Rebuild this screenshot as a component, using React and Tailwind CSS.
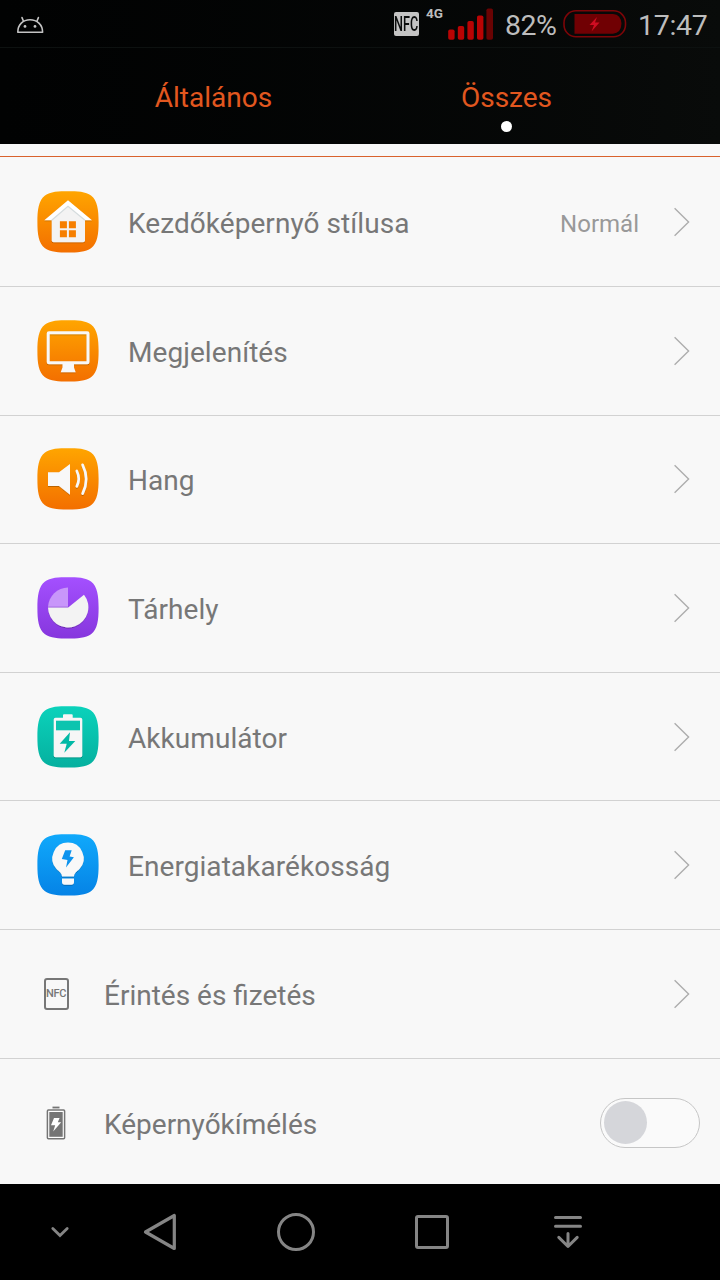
import React, { useState } from 'react'

function Tile({ id, from, to, children }) {
    return (
        <svg width="62" height="62" viewBox="0 0 62 62" className="shrink-0">
            <defs>
                <linearGradient id={id} x1="0" y1="0" x2="0" y2="1">
                    <stop offset="0" stopColor={from} />
                    <stop offset="1" stopColor={to} />
                </linearGradient>
                <filter id={`${id}-shadow`} x="-20%" y="-20%" width="140%" height="140%">
                    <feDropShadow dx="0" dy="0.8" stdDeviation="0.7" floodColor="#000" floodOpacity="0.3" />
                </filter>
            </defs>
            <path
                d="M31 0.2C40 0.2 49 0.4 54 4.5C60.5 9.6 61.6 19 61.6 31C61.6 43 60.5 52.2 54 57.3C49 61.2 40 61.6 31 61.6C22 61.6 13 61.2 8 57.3C1.5 52.2 0.4 43 0.4 31C0.4 19 1.5 9.6 8 4.5C13 0.4 22 0.2 31 0.2Z"
                fill={`url(#${id})`}
            />
            <g filter={`url(#${id}-shadow)`}>{children}</g>
        </svg>
    )
}

const HomeIcon = () => (
    <Tile id="home" from="#ffa500" to="#f36f00">
        <path d="M31 12L48 27V49.3a2 2 0 0 1-2 2H16.7a2 2 0 0 1-2-2V27Z" fill="#f3f3f3" />
        <path d="M31 9.3L55 29.3H48L31 15L14.5 29.3H7.3Z" fill="#fff" />
        <path d="M14.7 29.3L31 15.4L48 29.3" fill="none" stroke="#d5dcde" strokeWidth="1.2" />
        <path d="M22.9 30.2h7v7h-7zM31.9 30.2h7v7h-7zM22.9 39.2h7v7h-7zM31.9 39.2h7v7h-7z" fill="#f67f00" />
    </Tile>
)

const DisplayIcon = () => (
    <Tile id="display" from="#ffa500" to="#f36f00">
        <rect x="11.2" y="12.8" width="39.8" height="30" rx="0.8" fill="none" stroke="#f8f8f8" strokeWidth="3" />
        <path d="M25.5 44H37V47.5L38.7 52.3H23.7L25.5 47.5Z" fill="#f8f8f8" />
    </Tile>
)

const SoundIcon = () => (
    <Tile id="sound" from="#ffa500" to="#f36f00">
        <path d="M11 24.3H22L33 16V46.7L22 38H11Z" fill="#f8f8f8" />
        <path d="M39.8 23Q43.6 30.7 39.8 38.4M45.6 16.8Q52.8 31 45.6 45.6" fill="none" stroke="#f8f8f8" strokeWidth="2.7" strokeLinecap="round" />
    </Tile>
)

const StorageIcon = () => (
    <Tile id="storage" from="#a450ff" to="#8636dd">
        <path d="M11 29.8A20.3 20.3 0 0 1 31 10.5V29.8Z" fill="#c896fa" />
        <path d="M11 30.6H31.2L47 17.7A20.2 20.2 0 1 1 11 30.6Z" fill="#f3f3f3" />
    </Tile>
)

const BatteryIcon = () => (
    <Tile id="battery" from="#0bd2bb" to="#05b09f">
        <path d="M26 11.7V9.3a1 1 0 0 1 1-1h7.7a1 1 0 0 1 1 1V11.7H43.5a1.8 1.8 0 0 1 1.8 1.8V49.5a1.8 1.8 0 0 1-1.8 1.8H18.5a1.8 1.8 0 0 1-1.8-1.8V13.5a1.8 1.8 0 0 1 1.8-1.8Z" fill="#f6f6f6" />
        <path d="M19 14.7H43V24.3H19Z" fill="#08c4af" />
        <path d="M33 26.3L22.7 37.7H29.7L27.3 46.7L38.3 35H32Z" fill="#06b9a6" />
    </Tile>
)

const PowerIcon = () => (
    <Tile id="power" from="#10a9fb" to="#0583e6">
        <path d="M31 8.6A15.7 15.7 0 0 1 42.7 34.7C39.5 38 37.2 39 37 42.6H25C24.8 39 22.5 38 19.3 34.7A15.7 15.7 0 0 1 31 8.6Z" fill="#f8f8f8" />
        <path d="M25 44.4H37V48Q37 50.7 34.3 50.7H27.7Q25 50.7 25 48Z" fill="#f8f8f8" />
        <path d="M28.2 16.3H34.7L32.6 22.6L36.9 23.3L29 33.5L30.5 26L24.8 25Z" fill="#0c93ee" />
    </Tile>
)

const NfcIcon = () => (
    <div className="flex h-8 w-[25px] shrink-0 items-center justify-center rounded-[3px] border-2 border-[#777]">
        <span className="text-[11px] leading-none font-medium tracking-[-0.4px] text-[#777]">NFC</span>
    </div>
)

const SaverIcon = () => (
    <svg width="20" height="34" viewBox="0 0 20 34" className="shrink-0">
        <path d="M6.5 1.5H13.5" stroke="#757575" strokeWidth="1.8" />
        <rect x="1.4" y="4" width="17.2" height="28.8" rx="1" fill="#fff" stroke="#757575" strokeWidth="1.5" />
        <rect x="3.3" y="6" width="13.4" height="24.8" fill="#757575" />
        <path d="M8 12H13.6L11.8 16.2H15.2L7.2 25.6L9.2 19.2H5Z" fill="#fff" />
    </svg>
)

const items = [
    { label: 'Kezdőképernyő stílusa', icon: HomeIcon, value: 'Normál' },
    { label: 'Megjelenítés', icon: DisplayIcon },
    { label: 'Hang', icon: SoundIcon },
    { label: 'Tárhely', icon: StorageIcon },
    { label: 'Akkumulátor', icon: BatteryIcon },
    { label: 'Energiatakarékosság', icon: PowerIcon },
    { label: 'Érintés és fizetés', icon: NfcIcon, small: true },
    { label: 'Képernyőkímélés', icon: SaverIcon, small: true, toggle: true },
]

function StatusBar() {
    return (
        <div className="flex h-12 items-start border-b border-[#0d1110] pl-4 text-[#bdbdbd]">
            <svg width="28" height="18" viewBox="0 0 28 18" className="mt-4 shrink-0" fill="none" stroke="#c4c4c4" strokeWidth="1.6" strokeLinecap="round">
                <path d="M1.8 16.3C1.8 8.6 7 3.8 14 3.8S26.6 8.6 26.6 16.3Z" strokeLinejoin="round" />
                <path d="M6 1.6L7.4 5M22.4 1.6L21 5" />
                <circle cx="9" cy="10.4" r="1.4" fill="#c4c4c4" stroke="none" />
                <circle cx="19" cy="10.4" r="1.4" fill="#c4c4c4" stroke="none" />
            </svg>
            <div className="mt-3 ml-[350px] flex h-6 w-[25px] shrink-0 items-center justify-center rounded-[2px] bg-[#c4c4c4]">
                <span className="scale-x-[0.6] text-[21px] leading-none font-medium text-[#0b0d0d]">NFC</span>
            </div>
            <span className="mt-[7px] ml-[7px] w-[18px] shrink-0 text-[13.5px] leading-[13px] font-bold">4G</span>
            <svg width="46" height="32" viewBox="0 0 46 32" className="mt-2 ml-1 shrink-0" fill="#b90404">
                <rect x="0.2" y="21.5" width="6.4" height="10.2" rx="1.8" />
                <rect x="9.8" y="18" width="6.4" height="13.7" rx="1.8" />
                <rect x="19.4" y="13" width="6.4" height="18.7" rx="1.8" />
                <rect x="29" y="7.5" width="6.4" height="24.2" rx="1.8" />
                <rect x="38.4" y="0.5" width="6.6" height="31.2" rx="1.8" fill="#6a0303" />
            </svg>
            <span className="mt-2 ml-[11px] w-[53px] shrink-0 text-[28.5px] leading-[36px] tracking-[-0.5px]">82%</span>
            <svg width="64" height="29" viewBox="0 0 64 29" className="mt-[9px] ml-[5px] shrink-0">
                <rect x="1" y="1.8" width="61.5" height="26" rx="12" fill="none" stroke="#7d0508" strokeWidth="1.6" />
                <path d="M11.5 5H50Q58 5.6 58.5 14.8Q58 24 50 24.8H11.5Z" fill="#700003" />
                <path d="M34 8L26.5 16H31L28.5 22.5L36.5 13.5H32Z" fill="#cf0d22" />
            </svg>
            <span className="mt-2 ml-[11px] shrink-0 text-[28.5px] leading-[36px] tracking-[-0.3px]">17:47</span>
        </div>
    )
}

function Tabs({ tab, setTab }) {
    return (
        <div className="flex h-24 px-[67px]">
            {['Általános', 'Összes'].map((name) => (
                <button
                    key={name}
                    onClick={() => setTab(name)}
                    className="flex flex-1 flex-col items-center pt-8 text-[28px] leading-[36px] text-[#e2571f]"
                >
                    <span>{name}</span>
                    {tab === name && <span className="mt-[5px] size-[11px] rounded-full bg-white" />}
                </button>
            ))}
        </div>
    )
}

function Toggle({ on, setOn }) {
    return (
        <button
            role="switch"
            aria-checked={on}
            onClick={() => setOn(!on)}
            className={`mr-5 flex h-[50px] w-[100px] items-center rounded-full border border-[#c6c6c6] bg-[#fafafa] px-[3px] ${on ? 'justify-end' : 'justify-start'}`}
        >
            <span className="size-[43px] rounded-full bg-[#d5d6da]" />
        </button>
    )
}

function Row({ item, on, setOn }) {
    const Icon = item.icon

    return (
        <div className="flex h-[128.6px] shrink-0 items-center border-b border-[#d2d2d2] first:h-[130px] last:h-[129.6px]">
            {item.small ? (
                <div className="flex w-[104px] shrink-0 justify-center pr-2 pl-4">
                    <Icon />
                </div>
            ) : (
                <div className="w-32 shrink-0 pl-[37px]">
                    <Icon />
                </div>
            )}
            <span className={`flex-1 pt-1 text-[28px] leading-[36px] text-[#777] ${item.small ? 'tracking-normal' : 'tracking-[0.06px]'}`}>
                {item.label}
            </span>
            {item.value && <span className="mr-[34px] pt-1 text-[24px] leading-[32px] text-[#999]">{item.value}</span>}
            {item.toggle ? (
                <Toggle on={on} setOn={setOn} />
            ) : (
                <svg width="17" height="30" viewBox="0 0 17 30" className="mr-[30px] shrink-0">
                    <path d="M1.6 1.2L15.6 15L1.6 28.8" fill="none" stroke="#adadad" strokeWidth="1.4" />
                </svg>
            )}
        </div>
    )
}

function NavBar() {
    return (
        <div className="flex h-24 shrink-0 items-center bg-black text-[#858585]">
            <div className="flex w-[92px] justify-center pl-7">
                <svg width="20" height="12" viewBox="0 0 20 12" fill="none" stroke="currentColor" strokeWidth="2.8" strokeLinecap="round">
                    <path d="M2.8 2.5L10 9.5L17.2 2.5" />
                </svg>
            </div>
            <div className="flex w-[136px] justify-center">
                <svg width="36" height="40" viewBox="0 0 36 40" fill="none" stroke="currentColor" strokeWidth="3.2" strokeLinejoin="round">
                    <path d="M3.5 20L32.3 3.5V36.5Z" />
                </svg>
            </div>
            <div className="flex w-[136px] justify-center">
                <div className="size-[38px] rounded-full border-[3px] border-[#858585]" />
            </div>
            <div className="flex w-[136px] justify-center">
                <div className="size-[34px] rounded-[3px] border-[3px] border-[#858585]" />
            </div>
            <div className="flex w-[136px] justify-center">
                <svg width="32" height="36" viewBox="0 0 32 36" fill="none" stroke="currentColor" strokeWidth="3" strokeLinecap="round" strokeLinejoin="round">
                    <path d="M3.5 3.6H28.5M3.5 12.3H28.5M16 19.5V32.3M6.8 23.4L16 32.5L25.2 23.4" />
                </svg>
            </div>
        </div>
    )
}

export default function App() {
    const [tab, setTab] = useState('Összes')
    const [on, setOn] = useState(false)

    return (
        <div className="flex h-[1280px] w-[720px] flex-col overflow-hidden bg-[#f8f8f8] font-[Roboto,sans-serif]">
            <header className="h-36 shrink-0 bg-linear-to-r from-[#010202] to-[#090b0a]">
                <StatusBar />
                <Tabs tab={tab} setTab={setTab} />
            </header>
            <div className="h-[13px] shrink-0 border-b border-[#d9622d]" />
            <main className="flex min-h-0 flex-1 flex-col overflow-hidden">
                {items.map((item) => (
                    <Row key={item.label} item={item} on={on} setOn={setOn} />
                ))}
            </main>
            <NavBar />
        </div>
    )
}
